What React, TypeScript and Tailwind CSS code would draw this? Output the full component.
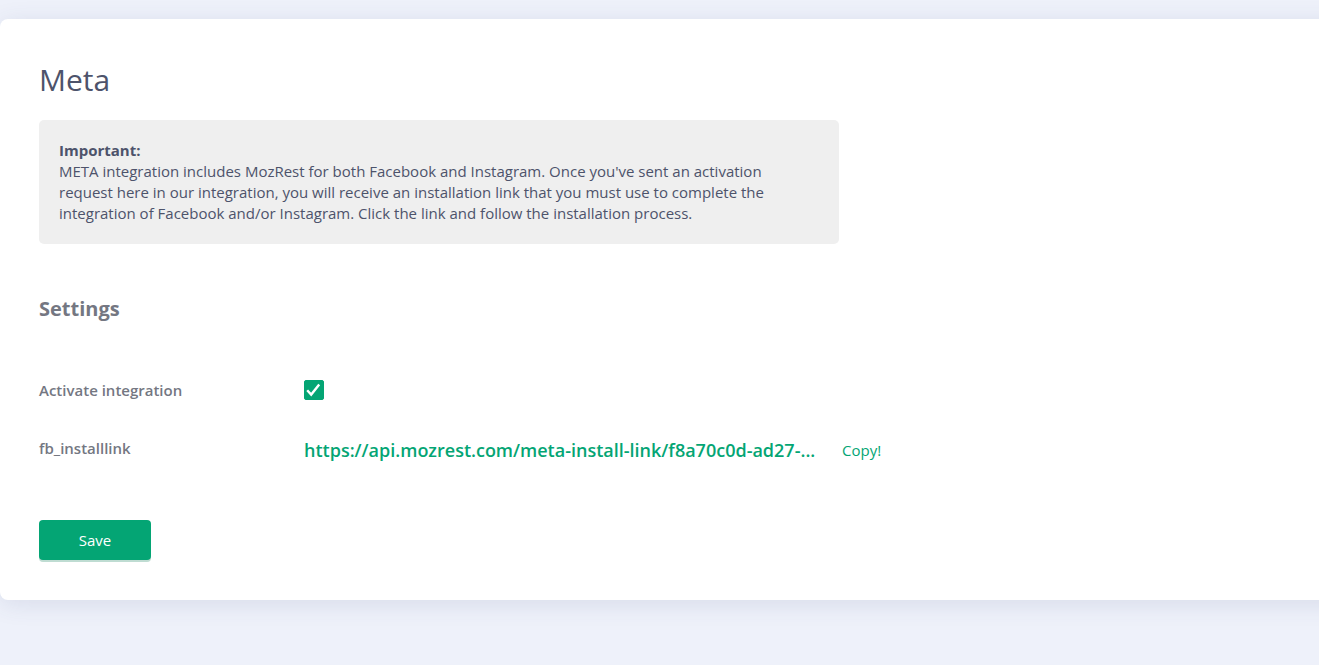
export default function App() {
  return (
    <div className="min-h-screen overflow-hidden bg-[#eef1fa] pt-[19px] font-['Open_Sans',sans-serif] text-[#4d536b]">
      <main className="-mr-8 rounded-lg bg-white px-[39px] pt-10 pb-10 shadow-[0_4px_24px_rgba(60,70,120,0.12)]">
        <h1 className="text-[30px] leading-[42px]">Meta</h1>
        <section className="mt-[19px] max-w-[800px] rounded-[5px] bg-[#efefef] p-5 text-[15px] leading-[21px]">
          <strong className="block">Important:</strong>
          <p>
            META integration includes MozRest for both Facebook and Instagram. Once you've sent an activation request
            here in our integration, you will receive an installation link that you must use to complete the integration
            of Facebook and/or Instagram. Click the link and follow the installation process.
          </p>
        </section>
        <h2 className="mt-[50px] text-xl leading-[30px] font-bold text-[#747782]">Settings</h2>
        <form onSubmit={(e) => e.preventDefault()}>
          <div className="mt-[52px] flex h-7 items-center">
            <label htmlFor="activate" className="w-[265px] shrink-0 text-[15px] font-semibold text-[#747782]">
              Activate integration
            </label>
            <span className="relative grid size-5 place-items-center">
              <input
                id="activate"
                type="checkbox"
                defaultChecked
                className="peer size-5 appearance-none rounded-[2px] border border-[#04a574] bg-white checked:bg-[#04a574]"
              />
              <svg
                viewBox="0 0 20 20"
                className="pointer-events-none absolute inset-0 hidden size-5 peer-checked:block"
                fill="none"
                stroke="white"
                strokeWidth="2.4"
                aria-hidden="true"
              >
                <path d="M3.2 10.2 7.2 14.6 15.2 4.5" />
              </svg>
            </span>
          </div>
          <div className="mt-8 flex h-7 items-center">
            <span className="w-[265px] shrink-0 pb-1 text-[15px] font-semibold text-[#747782]">fb_installlink</span>
            <div className="w-[538px] shrink-0">
              <a href="#link" className="whitespace-nowrap text-lg font-semibold text-[#04a574]">
                https://api.mozrest.com/meta-install-link/f8a70c0d-ad27-...
              </a>
            </div>
            <button type="button" className="text-[15px] text-[#04a574]">
              Copy!
            </button>
          </div>
          <button
            type="submit"
            className="mt-14 block h-10 w-28 rounded bg-[#04a574] text-[15px] text-white shadow-[0_2px_0_#bfdcd2]"
          >
            Save
          </button>
        </form>
      </main>
    </div>
  );
}
